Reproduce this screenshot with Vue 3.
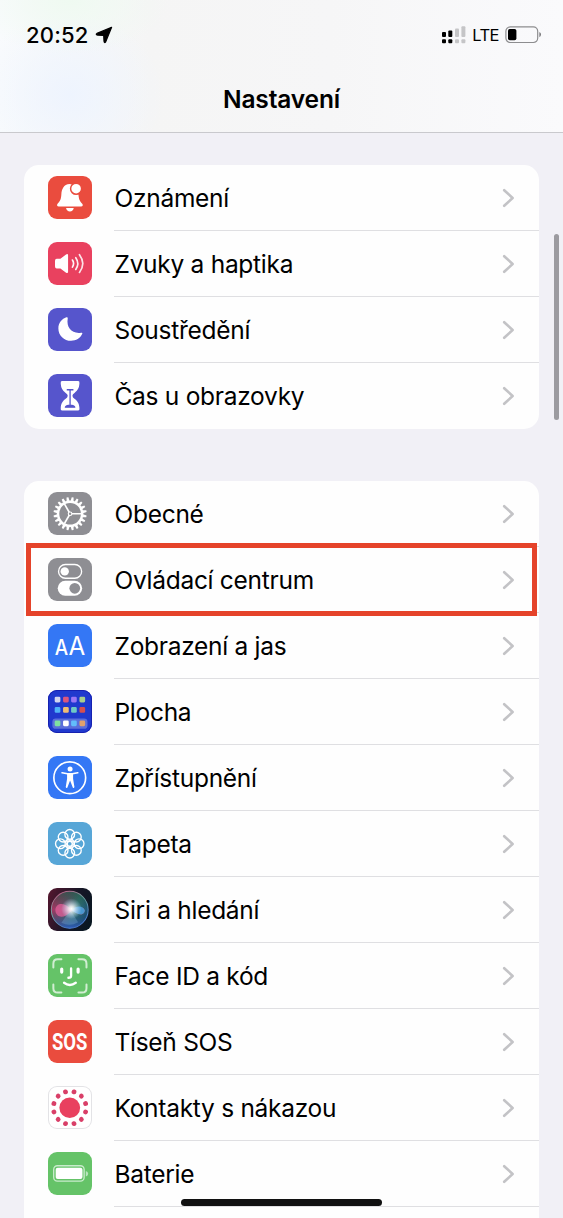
<script setup>
const groups = [
  [
    { icon: 'bell', label: 'Oznámení' },
    { icon: 'sound', label: 'Zvuky a haptika' },
    { icon: 'moon', label: 'Soustředění' },
    { icon: 'hourglass', label: 'Čas u obrazovky' },
  ],
  [
    { icon: 'gear', label: 'Obecné' },
    { icon: 'toggles', label: 'Ovládací centrum', marked: true },
    { icon: 'display', label: 'Zobrazení a jas' },
    { icon: 'home', label: 'Plocha' },
    { icon: 'access', label: 'Zpřístupnění' },
    { icon: 'flower', label: 'Tapeta' },
    { icon: 'siri', label: 'Siri a hledání' },
    { icon: 'face', label: 'Face ID a kód' },
    { icon: 'sos', label: 'Tíseň SOS' },
    { icon: 'exposure', label: 'Kontakty s nákazou' },
    { icon: 'battery', label: 'Baterie' },
  ],
]

const range = (n) => Array.from({ length: n }, (_, i) => i)

const apps = [
  ['#d3d6ee', '#d9577e', '#9b76f5', '#a9cf8d'],
  ['#4fb2f7', '#efbd74', '#6fcac4', '#d6504f'],
  ['#7fe0a0', '#ffffff', '#62bdfb', '#e0a16d'],
]
const appRows = [20, 51, 91]
const appCols = [20, 45, 69, 94]
</script>

<template>
  <div class="screen">
    <header class="top">
      <div class="status">
        <div class="left">
          <span class="time">20:52</span>
          <svg class="arrow" viewBox="0 0 18 18">
            <path d="M16.6 1.3 L10.6 15.9 Q9.4 17.6 9 15.2 L8.7 9.4 L2.6 9.1 Q.2 8.5 2 7.4 Z" fill="#000" stroke="#000" stroke-width="1.2" stroke-linejoin="round" />
          </svg>
        </div>
        <div class="right">
          <svg class="signal" viewBox="0 0 24 18">
            <g fill="#000">
              <rect x="0" y="6" width="4" height="5" rx="1" /><rect x="6.3" y="4.5" width="4" height="6.5" rx="1" />
              <rect x="0" y="13.3" width="4" height="4" rx="1" /><rect x="6.3" y="13.3" width="4" height="4" rx="1" />
            </g>
            <g fill="#c5c5c7">
              <rect x="13" y="2.5" width="4" height="8.5" rx="1" /><rect x="19.4" y="0.3" width="4" height="10.7" rx="1" />
              <rect x="13" y="13.3" width="4" height="4" rx="1" /><rect x="19.4" y="13.3" width="4" height="4" rx="1" />
            </g>
          </svg>
          <span class="lte">LTE</span>
          <svg class="power" viewBox="0 0 37 18">
            <rect x=".9" y=".9" width="31.8" height="15.6" rx="4.4" fill="none" stroke="#8d8d8f" stroke-width="1.2" />
            <rect x="3" y="3" width="8.4" height="11.2" rx="1.8" fill="#000" />
            <path d="M34.4 6 Q36 6.8 36 8.6 Q36 10.4 34.4 11.2Z" fill="#77777a" />
          </svg>
        </div>
      </div>
      <h1>Nastavení</h1>
    </header>

    <main>
      <section v-for="(group, g) in groups" :key="g" class="card">
        <div v-for="row in group" :key="row.icon" class="row" :class="{ marked: row.marked }">
          <svg class="icon" viewBox="0 0 130 130" :class="row.icon">
            <template v-if="row.icon === 'bell'">
              <path d="M65 24 C46 25 41 40 40 54 C39 71 36 75 28 84 Q25 91 32 91 H99 Q106 91 103 84 C95 75 92 71 91 54 L88 30 Z" fill="#fff" />
              <path d="M54 96 H77 Q75 106 65.500 106 Q56 106 54 96Z" fill="#fff" />
              <circle cx="84" cy="38" r="16.500" fill="#fff" stroke="#ea4c3e" stroke-width="4.500" />
            </template>
            <template v-else-if="row.icon === 'sound'">
              <path d="M26 50 H37 L54 37 Q60 34 60 40 V89 Q60 95 54 92 L37 79 H26 Q21 79 21 73 V56 Q21 50 26 50Z" fill="#fff" />
              <g fill="none" stroke="#fff" stroke-linecap="round" stroke-width="5">
                <path d="M73 54 Q80 64.500 73 75" opacity=".95" />
                <path d="M83 47 Q95 64.500 83 82" opacity=".9" />
                <path d="M94 38 Q114 64.500 94 91" opacity=".85" />
              </g>
            </template>
            <path v-else-if="row.icon === 'moon'" d="M55 28 Q59 26 59 31 C54 60 72 78 99 74 Q105 73 102 78 C96 91 84 98 69 98 C48 98 31 82 31 61 C31 45 42 32 55 28Z" fill="#fff" />
            <template v-else-if="row.icon === 'hourglass'">
              <path d="M42 21 H90 Q95 21 94 28 C93 44 88 49 80 56 Q73 61 73 65 Q73 70 80 75 C89 82 93 88 94 102 Q95 109 90 109 H42 Q37 109 38 102 C39 88 43 82 52 75 Q59 70 59 65 Q59 61 52 56 C44 49 39 44 38 28 Q37 21 42 21Z" fill="#fff" />
              <path d="M56 47 H76 M66 47 V96 M52 99 Q54 94 66 93 Q78 94 80 99 Z" fill="#5655cc" stroke="#5655cc" stroke-width="4" stroke-linejoin="round" />
            </template>
            <g v-else-if="row.icon === 'gear'" transform="translate(66 65)" fill="none" stroke="#fff">
              <circle r="36" stroke-width="7.500" />
              <circle r="7" fill="#fff" stroke="none" />
              <path v-for="i in range(3)" :key="i" d="M0 0 H34" stroke-width="5" :transform="`rotate(${i * 120})`" />
              <path v-for="i in range(20)" :key="'t' + i" d="M38 -4.500 L49.500 -2.800 V2.800 L38 4.500Z" fill="#fff" stroke="none" :transform="`rotate(${i * 18 + 9})`" />
              <circle r="3.500" fill="#8e8e93" stroke="none" />
            </g>
            <template v-else-if="row.icon === 'toggles'">
              <rect x="31.500" y="19.500" width="69" height="41" rx="20.500" fill="none" stroke="#fff" stroke-width="4" />
              <circle cx="50" cy="40" r="12.500" fill="#fff" />
              <rect x="29" y="68" width="73" height="45" rx="22.500" fill="#fff" />
              <circle cx="80" cy="90.500" r="16" fill="#8e8e93" />
            </template>
            <template v-else-if="row.icon === 'display'">
              <text x="20" y="94" textLength="40" lengthAdjust="spacingAndGlyphs" class="letter small">A</text>
              <text x="61" y="94" textLength="50" lengthAdjust="spacingAndGlyphs" class="letter">A</text>
            </template>
            <template v-else-if="row.icon === 'home'">
              <rect x="13" y="85" width="105" height="31" rx="10" fill="#5b6fda" />
              <template v-for="(line, r) in apps" :key="r">
                <rect v-for="(c, i) in line" :key="i" :x="appCols[i]" :y="appRows[r]" width="17" height="17" rx="4" :fill="c" />
              </template>
            </template>
            <template v-else-if="row.icon === 'access'">
              <circle cx="65" cy="65" r="47.500" fill="none" stroke="#fff" stroke-width="5" />
              <circle cx="66" cy="39" r="7.500" fill="#fff" />
              <path d="M42 50 L58 53 H73 L89 50" fill="none" stroke="#fff" stroke-width="5" stroke-linecap="round" />
              <path d="M57 52 H75 V68 L79 93 Q77 98 74 94 L66 73 L58 94 Q55 98 53 93 L57 68Z" fill="#fff" />
            </template>
            <g v-else-if="row.icon === 'flower'" transform="translate(65 65)" fill="none" stroke="#fff">
              <g v-for="i in range(8)" :key="i" :transform="`rotate(${i * 45})`">
                <circle cx="28" r="14.500" stroke-width="4" />
                <path d="M8 0 L17 -8 M8 0 L17 8" stroke-width="3" />
              </g>
              <circle r="7.500" stroke-width="4" />
            </g>
            <template v-else-if="row.icon === 'siri'">
              <defs>
                <radialGradient id="glow"><stop offset="0" stop-color="#fff" /><stop offset=".25" stop-color="#fff" stop-opacity=".8" /><stop offset="1" stop-color="#bcdcff" stop-opacity="0" /></radialGradient>
                <linearGradient id="orb" x1="0" y1=".3" x2="1" y2=".7"><stop offset="0" stop-color="#b52d60" /><stop offset=".36" stop-color="#765473" /><stop offset=".62" stop-color="#397c7b" /><stop offset="1" stop-color="#164a7a" /></linearGradient>
                <linearGradient id="deep" x1="0" y1="0" x2="0" y2="1"><stop offset="0" stop-color="#1d5543" stop-opacity=".75" /><stop offset=".5" stop-color="#13402f" stop-opacity="0" /><stop offset="1" stop-color="#2f57c4" stop-opacity=".9" /></linearGradient>
                <linearGradient id="rim" x1="0" y1="0" x2=".5" y2="1"><stop offset="0" stop-color="#cc4c7d" /><stop offset=".5" stop-color="#6fa3a0" /><stop offset="1" stop-color="#4e7fd0" /></linearGradient>
              </defs>
              <circle cx="65" cy="65" r="55" fill="url(#orb)" />
              <circle cx="65" cy="65" r="55" fill="url(#deep)" stroke="url(#rim)" stroke-width="3" />
              <path d="M22 65 C25 42 49 43 69 63 C87 81 107 85 110 68 C107 52 86 55 68 70 C47 95 22 88 22 65Z" fill="#ea5f9b" fill-opacity=".7" />
              <path d="M69 66 C88 49 107 54 110 68 C106 85 86 80 69 66Z" fill="#3f9fd7" fill-opacity=".9" />
              <path d="M67 66 L40 104 Q66 116 90 102Z" fill="#91b9ed" fill-opacity=".28" />
              <circle cx="70" cy="62" r="31" fill="url(#glow)" />
            </template>
            <g v-else-if="row.icon === 'face'" fill="none" stroke="#fff" stroke-linecap="round" stroke-width="6">
              <path d="M16 40 V29 Q16 16 29 16 H40 M91 16 H102 Q115 16 115 29 V40 M115 91 V102 Q115 115 102 115 H91 M40 115 H29 Q16 115 16 102 V91" opacity=".7" />
              <path d="M41 45 V54 M90 45 V54" stroke-width="9.500" />
              <path d="M69 43 V65 Q69 71 61 71" stroke-width="7" />
              <path d="M48 86 Q65 99 83 86" stroke-width="7" />
            </g>
            <text v-else-if="row.icon === 'sos'" x="12" y="91" textLength="106" lengthAdjust="spacingAndGlyphs" class="sos-text">SOS</text>
            <template v-else-if="row.icon === 'exposure'">
              <circle cx="65" cy="65" r="31" fill="#e9405f" />
              <g transform="translate(65 65)" fill="#d93f68">
                <circle v-for="i in range(12)" :key="i" cx="49" r="7.200" :transform="`rotate(${i * 30 + 15})`" />
              </g>
            </template>
            <template v-else-if="row.icon === 'battery'">
              <rect x="17" y="41" width="91" height="46" rx="11" fill="none" stroke="#c8ebcb" stroke-width="4" />
              <rect x="23" y="47" width="80" height="34" rx="6" fill="#fff" />
              <path d="M113 57 Q120 59 120 65 Q120 71 113 73Z" fill="#b9e5bd" />
            </template>
          </svg>
          <div class="body">
            <span class="label">{{ row.label }}</span>
            <svg class="chevron" viewBox="0 0 13 20"><path d="M2.200 2.200 L10.600 10 L2.200 17.800" /></svg>
          </div>
        </div>
      </section>
    </main>
    <div class="scrollbar"></div>
    <div class="home-bar"></div>
  </div>
</template>

<style>
html, body { margin: 0; overflow: hidden; background: #f1f0f6; }
</style>

<style scoped>
.screen {
  position: relative;
  height: 1218px;
  overflow: hidden;
  background: #f1f0f6;
  color: #000;
  font-family: Inter, "Noto Sans", sans-serif;
}
.top {
  box-sizing: border-box;
  height: 133px;
  border-bottom: 1px solid #c9c9cd;
  background:
    radial-gradient(ellipse 100px 55px at 70px 0, #effaf1, transparent),
    radial-gradient(ellipse 95px 85px at 70px 95px, #eef4fe, transparent),
    linear-gradient(90deg, #f9fbfd 0, #f5f5f5 150px, #f6f6f7 330px, #fafafc 563px);
}
.status {
  display: flex;
  justify-content: space-between;
  height: 69px;
  padding: 0 21.500px 0 26px;
}
.left, .right { display: flex; align-items: center; }
.time { font-size: 22px; font-weight: 500; letter-spacing: .2px; }
.arrow { width: 18px; height: 18px; margin-left: 6px; }
.signal { width: 24px; height: 18px; }
.lte { margin: 1px 5.500px 0 6.500px; font-size: 16.500px; font-weight: 400; letter-spacing: -.5px; }
.power { width: 37px; height: 18px; }
h1 {
  margin: 0;
  height: 61px;
  font-size: 24.500px;
  font-weight: 600;
  line-height: 61px;
  letter-spacing: -.15px;
  text-align: center;
}
main {
  display: flex;
  flex-direction: column;
  gap: 52px;
  padding: 32px 24px 0;
}
.card {
  flex: none;
  border-radius: 15px;
  background: #fefefe;
}
.card:last-child { padding-bottom: 40px; }
.row {
  position: relative;
  display: flex;
  align-items: flex-start;
  height: 66px;
  padding-left: 24px;
}
.icon {
  flex: none;
  width: 43.500px;
  height: 43.500px;
  margin-top: 10.600px;
  border-radius: 9px;
}
.body {
  display: flex;
  flex: 1;
  box-sizing: border-box;
  align-items: center;
  justify-content: space-between;
  height: 66px;
  margin-left: 22.500px;
  padding-right: 24px;
  border-bottom: 1px solid #dfdfe2;
}
.card:first-child .row:last-child .body { border-bottom-color: transparent; }
.label { padding-left: .500px; font-size: 24.500px; font-weight: 400; letter-spacing: -.28px; white-space: nowrap; }
.chevron { width: 13px; height: 20px; }
.chevron path { fill: none; stroke: #c3c3c6; stroke-width: 2.600; stroke-linecap: round; stroke-linejoin: round; }
.marked::after {
  content: "";
  position: absolute;
  box-sizing: border-box;
  left: 2px;
  right: 2px;
  top: -4px;
  height: 73px;
  border: 5px solid #e5432a;
  z-index: 1;
}
.bell, .sos { background: #ea4c3e; }
.sound { background: #e9415f; }
.moon, .hourglass { background: #5655cc; }
.gear, .toggles { background: #8e8e93; }
.display, .access { background: #3477f5; }
.home { background: #2039ce; box-shadow: inset 0 0 0 1px #1621b0; }
.flower { background: #57a6d7; }
.siri { background: linear-gradient(110deg, #57172f, #161626 55%, #061720); }
.face, .battery { background: #65c368; }
.exposure { background: #fff; box-shadow: inset 0 0 0 1px #e3e3e6; }
.sos { overflow: visible; }
.letter { font-size: 76px; font-weight: 400; fill: #fff; }
.small { font-size: 63px; font-weight: 500; }
.sos-text { font: 700 70px Roboto, sans-serif; fill: #fff; }
.scrollbar {
  position: absolute;
  top: 234px;
  right: 4px;
  width: 5px;
  height: 186px;
  border-radius: 3px;
  background: #9c9ba0;
}
.home-bar {
  position: absolute;
  left: 181px;
  top: 1199px;
  width: 201px;
  height: 7px;
  border-radius: 4px;
  background: #111;
}
</style>
